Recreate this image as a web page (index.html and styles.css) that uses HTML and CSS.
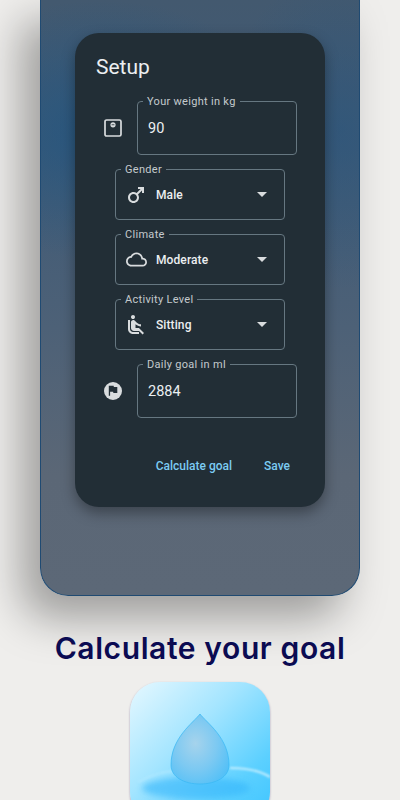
FILE: index.html
```html
<!DOCTYPE html>
<html lang="en">
<head>
<meta charset="utf-8">
<title>Calculate your goal</title>
<link rel="stylesheet" href="styles.css">
</head>
<body>
<main class="page">
  <section class="phone">
    <div class="card">
      <h2 class="card-title">Setup</h2>
      <div class="row row-first">
        <svg class="icon" viewBox="0 0 24 24"><rect x="4" y="4" width="16" height="16" rx="1.6" fill="none" stroke="#d9dcde" stroke-width="1.7"/><circle cx="12" cy="8.8" r="2.6" fill="#d9dcde"/><rect x="10.6" y="8.4" width="2.8" height="0.8" fill="#222e36"/></svg>
        <div class="field field-text"><span class="label">Your weight in kg</span><span class="value">90</span></div>
      </div>
      <div class="field field-select"><span class="label">Gender</span>
        <svg class="icon sel-icon" viewBox="0 0 24 24"><path fill="#d9dcde" d="M9.5 11c1.93 0 3.5 1.57 3.5 3.5S11.43 18 9.5 18 6 16.43 6 14.5 7.57 11 9.5 11zm0-2C6.46 9 4 11.46 4 14.5S6.46 20 9.5 20s5.5-2.46 5.5-5.5c0-1.16-.36-2.23-.97-3.12L18 7.42V10h2V4h-6v2h2.58l-3.97 3.97C11.73 9.36 10.66 9 9.5 9z"/></svg>
        <span class="sel-value">Male</span><span class="arrow"></span></div>
      <div class="field field-select"><span class="label">Climate</span>
        <svg class="icon sel-icon cloud-icon" viewBox="0 0 24 24"><path fill="#d9dcde" d="M19.35 10.04C18.67 6.59 15.64 4 12 4 9.11 4 6.6 5.64 5.35 8.04 2.34 8.36 0 10.91 0 14c0 3.31 2.69 6 6 6h13c2.76 0 5-2.24 5-5 0-2.64-2.05-4.78-4.65-4.96zM19 18H6c-2.21 0-4-1.79-4-4s1.79-4 4-4h.71C7.37 7.69 9.48 6 12 6c3.04 0 5.5 2.46 5.5 5.5v.5H19c1.66 0 3 1.34 3 3s-1.34 3-3 3z"/></svg>
        <span class="sel-value">Moderate</span><span class="arrow"></span></div>
      <div class="field field-select"><span class="label">Activity Level</span>
        <svg class="icon sel-icon" viewBox="0 0 24 24"><path fill="#d9dcde" d="M7.59 5.41c-.78-.78-.78-2.05 0-2.83.78-.78 2.05-.78 2.83 0 .78.78.78 2.05 0 2.83-.79.79-2.05.79-2.83 0zM6 16V7H4v9c0 2.76 2.24 5 5 5h6v-2H9c-1.66 0-3-1.34-3-3zm14 4.07L14.93 15H11.5v-3.68c1.4 1.15 3.6 2.16 5.5 2.16v-2.16c-1.66.02-3.61-.87-4.67-2.04l-1.4-1.55c-.19-.21-.43-.38-.69-.5-.29-.14-.62-.23-.96-.23h-.03C8.01 7 7 8.01 7 9.25V15c0 1.66 1.34 3 3 3h5.07l3.5 3.5L20 20.07z"/></svg>
        <span class="sel-value">Sitting</span><span class="arrow"></span></div>
      <div class="row">
        <svg class="icon" viewBox="0 0 24 24"><circle cx="12" cy="12" r="9" fill="#d9dcde"/><path fill="#222e36" d="M12.9 8l-.3-1.2H7.8v10h1.3v-4h3l.3 1.2h3.9V8z"/></svg>
        <div class="field field-text"><span class="label">Daily goal in ml</span><span class="value">2884</span></div>
      </div>
      <div class="actions"><span class="action">Calculate goal</span><span class="action">Save</span></div>
    </div>
  </section>
  <h1 class="headline">Calculate your goal</h1>
  <div class="app-icon">
    <svg class="app-art" viewBox="0 0 140 140">
      <defs>
        <radialGradient id="drop" cx="0.42" cy="0.42" r="0.68"><stop offset="0" stop-color="#a6d3ec"/><stop offset="0.55" stop-color="#7cc9f2"/><stop offset="1" stop-color="#52c0f7"/></radialGradient>
        <filter id="soft" x="-20%" y="-60%" width="140%" height="220%"><feGaussianBlur stdDeviation="3"/></filter>
        <filter id="softer" x="-20%" y="-60%" width="140%" height="220%"><feGaussianBlur stdDeviation="1"/></filter>
      </defs>
      <ellipse cx="66" cy="106" rx="54" ry="11" fill="#35b6fb" opacity=".6" filter="url(#soft)"/>
      <path d="M100 86 C118 86 132 90 140 95" fill="none" stroke="#d8f4ff" stroke-width="2.2" opacity=".8" filter="url(#softer)"/>
      <path d="M8 100 C26 90 44 88 58 88" fill="none" stroke="#c6eeff" stroke-width="1.4" opacity=".5" filter="url(#softer)"/>
      <path d="M70 32 C63 41 41 56 41 83 C41 95 54 102 70 102 C86 102 99 95 99 83 C99 56 77 41 70 32Z" fill="url(#drop)" stroke="#38b8f4" stroke-width=".7"/>
    </svg>
  </div>
</main>
</body>
</html>
```
FILE: styles.css
```css
html, body {
  margin: 0;
  padding: 0;
  height: 800px;
  overflow: hidden;
}
.page {
  width: 400px;
  height: 800px;
  overflow: hidden;
  display: flex;
  flex-direction: column;
  align-items: center;
  background: #efeeec;
  font-family: Roboto, sans-serif;
}
.phone {
  box-sizing: border-box;
  width: 320px;
  height: 596px;
  flex: none;
  padding-top: 33px;
  border: 1px solid #1f4a72;
  border-top: 0;
  border-radius: 0 0 28px 28px;
  background:
    radial-gradient(ellipse 190px 130px at 60px 130px, rgba(30,85,130,.7), rgba(30,85,130,0)),
    radial-gradient(ellipse 120px 160px at 300px 130px, rgba(40,85,125,.55), rgba(40,85,125,0)),
    linear-gradient(180deg, #43596f 0%, #3f5a76 25%, #4d6177 55%, #5b6776 80%, #5c6877 100%);
  box-shadow: -18px 22px 44px rgba(0,0,0,.34);
}
.card {
  box-sizing: border-box;
  width: 250px;
  height: 474px;
  margin: 0 auto;
  padding: 20px 0 0;
  border-radius: 24px;
  background: #222e36;
  box-shadow: 0 6px 14px rgba(0,0,0,.35);
}
.card-title {
  margin: 0 0 20px 21px;
  font-size: 21px;
  line-height: 28px;
  font-weight: 400;
  color: #eceff1;
}
.row {
  display: flex;
  align-items: center;
  gap: 12px;
  padding-left: 26px;
}
.icon {
  width: 24px;
  height: 24px;
  flex: none;
  display: block;
}
.cloud-icon {
  width: 21px;
  height: 21px;
  margin: 0 1px 0 2px;
}
.field {
  position: relative;
  box-sizing: border-box;
  display: flex;
  align-items: center;
  border: 1px solid #667781;
  border-radius: 4px;
}
.field-text {
  width: 160px;
  height: 54px;
  padding-left: 10px;
}
.field-select {
  width: 170px;
  height: 51px;
  margin: 14px 0 14px 40px;
  padding: 0 17px 0 8px;
}
.label {
  position: absolute;
  top: -7px;
  left: 5px;
  padding: 0 4px 0 4px;
  font-size: 11px;
  line-height: 13px;
  letter-spacing: .3px;
  color: #c4cacd;
  background: #222e36;
}
.value {
  font-size: 14.5px;
  color: #eceff1;
}
.sel-value {
  flex: 1;
  margin-left: 8px;
  font-size: 12px;
  font-weight: 500;
  letter-spacing: .1px;
  color: #eceff1;
}
.arrow {
  width: 0;
  height: 0;
  border-left: 5px solid transparent;
  border-right: 5px solid transparent;
  border-top: 5px solid #d9dcde;
}
.actions {
  display: flex;
  justify-content: flex-end;
  gap: 32px;
  margin-top: 40px;
  padding-right: 35px;
}
.action {
  font-size: 12px;
  line-height: 16px;
  font-weight: 500;
  color: #7ccbf3;
}
.headline {
  flex: none;
  margin: 34px 0 0;
  font-family: Inter, sans-serif;
  font-size: 30px;
  line-height: 36px;
  font-weight: 600;
  letter-spacing: .6px;
  color: #0b0b52;
  white-space: nowrap;
}
.app-icon {
  flex: none;
  width: 140px;
  height: 140px;
  margin-top: 16px;
  border-radius: 30px;
  background: linear-gradient(135deg, #e6f8ff 0%, #a4e5ff 40%, #5cd0ff 75%, #3cc4ff 100%);
  box-shadow: 0 1px 2px rgba(70,50,120,.5);
}
.app-art {
  display: block;
  width: 140px;
  height: 140px;
}
```
